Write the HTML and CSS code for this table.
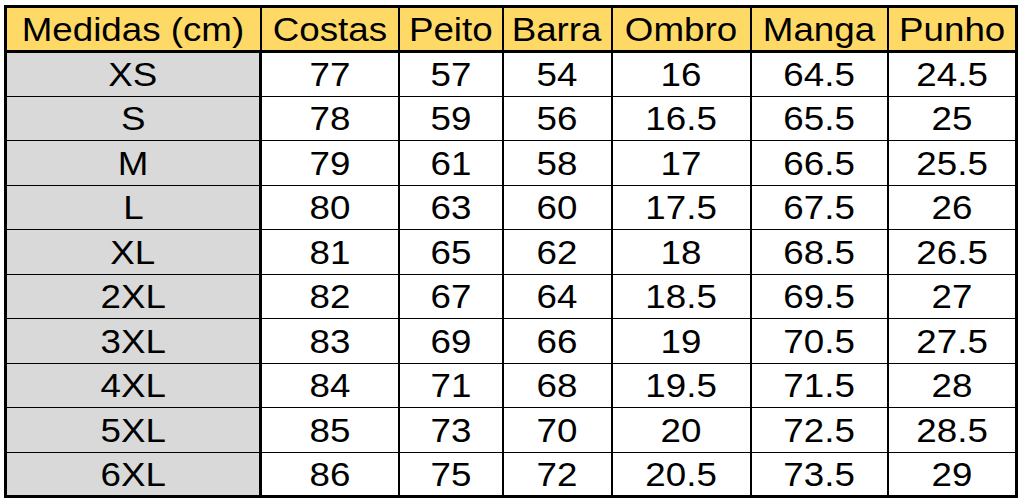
FILE: index.html
```html
<!DOCTYPE html>
<html lang="pt">
<head>
<meta charset="utf-8">
<title>Medidas</title>
<link rel="stylesheet" href="styles.css">
</head>
<body>
<table class="sizes">
  <colgroup>
    <col class="c-size"><col class="c-costas"><col class="c-peito"><col class="c-barra"><col class="c-ombro"><col class="c-manga"><col class="c-punho">
  </colgroup>
  <thead>
    <tr><th><span>Medidas (cm)</span></th><th><span>Costas</span></th><th><span>Peito</span></th><th><span>Barra</span></th><th><span>Ombro</span></th><th><span>Manga</span></th><th><span>Punho</span></th></tr>
  </thead>
  <tbody>
    <tr><th><span>XS</span></th><td><span>77</span></td><td><span>57</span></td><td><span>54</span></td><td><span>16</span></td><td><span>64.5</span></td><td><span>24.5</span></td></tr>
    <tr><th><span>S</span></th><td><span>78</span></td><td><span>59</span></td><td><span>56</span></td><td><span>16.5</span></td><td><span>65.5</span></td><td><span>25</span></td></tr>
    <tr><th><span>M</span></th><td><span>79</span></td><td><span>61</span></td><td><span>58</span></td><td><span>17</span></td><td><span>66.5</span></td><td><span>25.5</span></td></tr>
    <tr><th><span>L</span></th><td><span>80</span></td><td><span>63</span></td><td><span>60</span></td><td><span>17.5</span></td><td><span>67.5</span></td><td><span>26</span></td></tr>
    <tr><th><span>XL</span></th><td><span>81</span></td><td><span>65</span></td><td><span>62</span></td><td><span>18</span></td><td><span>68.5</span></td><td><span>26.5</span></td></tr>
    <tr><th><span>2XL</span></th><td><span>82</span></td><td><span>67</span></td><td><span>64</span></td><td><span>18.5</span></td><td><span>69.5</span></td><td><span>27</span></td></tr>
    <tr><th><span>3XL</span></th><td><span>83</span></td><td><span>69</span></td><td><span>66</span></td><td><span>19</span></td><td><span>70.5</span></td><td><span>27.5</span></td></tr>
    <tr><th><span>4XL</span></th><td><span>84</span></td><td><span>71</span></td><td><span>68</span></td><td><span>19.5</span></td><td><span>71.5</span></td><td><span>28</span></td></tr>
    <tr><th><span>5XL</span></th><td><span>85</span></td><td><span>73</span></td><td><span>70</span></td><td><span>20</span></td><td><span>72.5</span></td><td><span>28.5</span></td></tr>
    <tr><th><span>6XL</span></th><td><span>86</span></td><td><span>75</span></td><td><span>72</span></td><td><span>20.5</span></td><td><span>73.5</span></td><td><span>29</span></td></tr>
  </tbody>
</table>
</body>
</html>
```
FILE: styles.css
```css
html, body {
  margin: 0;
  padding: 0;
  background: #ffffff;
}
body {
  padding: 5px 0 0 4px;
}
.sizes {
  border-collapse: collapse;
  table-layout: fixed;
  width: 1014px;
  border: 3px solid #000;
  font-family: "Liberation Sans", Arial, sans-serif;
  font-size: 34px;
  color: #000;
}
.c-size { width: 255px; }
.c-costas { width: 138px; }
.c-peito { width: 104px; }
.c-barra { width: 109px; }
.c-ombro { width: 139px; }
.c-manga { width: 137px; }
.c-punho { width: 129px; }

.sizes th, .sizes td {
  padding: 0;
  text-align: center;
  vertical-align: middle;
  font-weight: normal;
  border-left: 2px solid #000;
  border-top: 1px solid #000;
  line-height: 1;
}
.sizes thead th {
  background: #ffd966;
  height: 42px;
  border-bottom: 3px solid #000;
}
.sizes tbody tr {
  height: 44.5px;
}
.sizes tbody th {
  background: #d9d9d9;
  border-right: 3px solid #000;
}
.sizes span {
  display: inline-block;
  transform: scaleX(1.08);
}
```
